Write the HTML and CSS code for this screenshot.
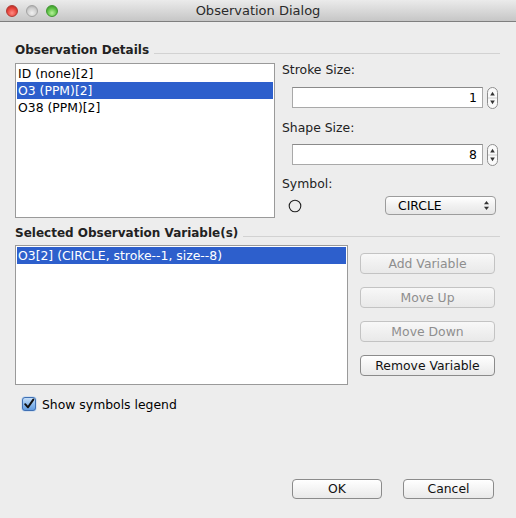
FILE: index.html
```html
<!DOCTYPE html>
<html>
<head>
<meta charset="utf-8">
<link rel="stylesheet" href="styles.css">
</head>
<body>
<div class="window">
  <div class="titlebar">
    <div class="lights">
      <span class="light red"></span>
      <span class="light gray"></span>
      <span class="light green"></span>
    </div>
    <div class="title">Observation Dialog</div>
  </div>
  <div class="content">
    <div class="group-head"><span class="group-title">Observation Details</span><span class="rule"></span></div>
    <div class="row1">
      <div class="listbox list1">
        <div class="item">ID (none)[2]</div>
        <div class="item selected">O3 (PPM)[2]</div>
        <div class="item">O38 (PPM)[2]</div>
      </div>
      <div class="props">
        <div class="label">Stroke Size:</div>
        <div class="field-row first">
          <div class="field">1</div>
          <svg class="stepper" width="11" height="22" viewBox="0 0 11 22">
            <rect x="0.5" y="0.5" width="10" height="21" rx="5" fill="#fafafa" stroke="#8e8e8e"/>
            <path d="M3.2 8.5 L5.5 4.8 L7.8 8.5 Z" fill="#333"/>
            <path d="M3.2 13.5 L5.5 17.2 L7.8 13.5 Z" fill="#333"/>
            <line x1="1" y1="11" x2="10" y2="11" stroke="#d0d0d0"/>
          </svg>
        </div>
        <div class="label second">Shape Size:</div>
        <div class="field-row second">
          <div class="field">8</div>
          <svg class="stepper" width="11" height="22" viewBox="0 0 11 22">
            <rect x="0.5" y="0.5" width="10" height="21" rx="5" fill="#fafafa" stroke="#8e8e8e"/>
            <path d="M3.2 8.5 L5.5 4.8 L7.8 8.5 Z" fill="#333"/>
            <path d="M3.2 13.5 L5.5 17.2 L7.8 13.5 Z" fill="#333"/>
            <line x1="1" y1="11" x2="10" y2="11" stroke="#d0d0d0"/>
          </svg>
        </div>
        <div class="label third">Symbol:</div>
        <div class="symbol-row">
          <svg class="circle" width="14" height="14" viewBox="0 0 14 14"><circle cx="7" cy="7" r="5.8" fill="none" stroke="#222" stroke-width="1.1"/></svg>
          <div class="combo">
            <span class="combo-text">CIRCLE</span>
            <svg class="combo-arrows" width="7" height="11" viewBox="0 0 7 11">
              <path d="M1 4.2 L3.5 1 L6 4.2 Z" fill="#333"/>
              <path d="M1 6.8 L3.5 10 L6 6.8 Z" fill="#333"/>
            </svg>
          </div>
        </div>
      </div>
    </div>
    <div class="group-head head2"><span class="group-title">Selected Observation Variable(s)</span><span class="rule"></span></div>
    <div class="row2">
      <div class="listbox list2">
        <div class="item selected">O3[2] (CIRCLE, stroke--1, size--8)</div>
      </div>
      <div class="buttons">
        <div class="btn disabled">Add Variable</div>
        <div class="btn disabled">Move Up</div>
        <div class="btn disabled">Move Down</div>
        <div class="btn">Remove Variable</div>
      </div>
    </div>
    <div class="check-row">
      <svg class="checkbox" width="16" height="16" viewBox="0 0 16 16">
        <defs>
          <linearGradient id="cb" x1="0" y1="0" x2="0" y2="1">
            <stop offset="0" stop-color="#c9e0f8"/>
            <stop offset="0.5" stop-color="#8fbcec"/>
            <stop offset="1" stop-color="#5f9ae0"/>
          </linearGradient>
        </defs>
        <rect x="0.5" y="0.5" width="15" height="15" rx="3" fill="#9cc4f0" opacity="0.6"/>
        <rect x="1.5" y="1.5" width="13" height="13" rx="2.5" fill="url(#cb)" stroke="#3f6fb3"/>
        <path d="M4.2 8.2 L7 11.3 L12.3 3.6" fill="none" stroke="#111" stroke-width="2" stroke-linecap="round" stroke-linejoin="round"/>
      </svg>
      <span class="check-label">Show symbols legend</span>
    </div>
  </div>
  <div class="footer">
    <div class="btn ok">OK</div>
    <div class="btn cancel">Cancel</div>
  </div>
</div>
</body>
</html>
```

FILE: styles.css
```css
* { box-sizing: border-box; }
html, body { margin: 0; padding: 0; }
body {
  font-family: "DejaVu Sans", "Liberation Sans", sans-serif;
  font-size: 12.4px;
  color: #000;
  background: #ededed;
}
.window {
  width: 516px;
  height: 518px;
  background: #ededed;
  display: flex;
  flex-direction: column;
  overflow: hidden;
}
.titlebar {
  height: 22px;
  flex: none;
  background: linear-gradient(#ebebeb, #d5d5d5 60%, #c6c6c6);
  border-bottom: 1px solid #7f7f7f;
  display: flex;
  align-items: center;
  position: relative;
}
.lights {
  display: flex;
  gap: 8px;
  padding-left: 6px;
}
.light {
  width: 12px;
  height: 12px;
  border-radius: 50%;
  display: block;
}
.light.red {
  background: radial-gradient(circle at 50% 70%, #ff8c83 0%, #e6423a 55%, #a8261f 100%);
  border: 1px solid #b03a33;
}
.light.gray {
  background: radial-gradient(circle at 50% 70%, #f0f0f0 0%, #cfcfcf 55%, #9e9e9e 100%);
  border: 1px solid #a3a3a3;
}
.light.green {
  background: radial-gradient(circle at 50% 70%, #b6f29a 0%, #5cbf43 55%, #2f8a22 100%);
  border: 1px solid #3f9630;
}
.title {
  position: absolute;
  left: 0;
  right: 0;
  text-align: center;
  font-size: 13px;
  color: #2a2a2a;
  line-height: 22px;
}
.content {
  padding: 21px 16px 0 15px;
}
.group-head {
  display: flex;
  align-items: flex-end;
  height: 14px;
  line-height: 14px;
}
.group-title {
  font-weight: bold;
  font-size: 12px;
  color: #222;
  white-space: nowrap;
}
.rule {
  flex: 1;
  border-top: 1px solid #d2d2d2;
  margin: 0 0 3px 5px;
}
.row1 {
  display: flex;
  margin-top: 6px;
}
.listbox {
  background: #fff;
  border: 1px solid #9a9a9a;
  padding: 1px;
}
.list1 { width: 260px; height: 155px; }
.item {
  height: 17px;
  line-height: 17px;
  padding-left: 1px;
  white-space: nowrap;
}
.item.selected {
  background: #2d5fcc;
  color: #fff;
}
.props {
  margin-left: 7px;
  flex: 1;
  display: flex;
  flex-direction: column;
}
.label {
  height: 14px;
  line-height: 14px;
  color: #222;
}
.label.second { margin-top: 12px; }
.label.third { margin-top: 11px; }
.field-row {
  display: flex;
  align-items: flex-start;
  padding-left: 10px;
}
.field-row.first { margin-top: 10px; }
.field-row.second { margin-top: 9px; }
.field {
  width: 191px;
  height: 21px;
  background: #fff;
  border: 1px solid #a9a9a9;
  border-top-color: #8a8a8a;
  text-align: right;
  padding-right: 5px;
  line-height: 19px;
}
.stepper {
  margin-left: 4px;
  margin-top: 0;
  display: block;
}
.symbol-row {
  display: flex;
  align-items: center;
  margin-top: 5px;
  height: 19px;
}
.circle {
  margin-left: 6px;
  display: block;
}
.combo {
  margin-left: auto;
  margin-right: 4px;
  width: 111px;
  height: 19px;
  border: 1px solid #9c9c9c;
  border-radius: 4px;
  background: linear-gradient(#ffffff, #f1f1f1 50%, #e6e6e6);
  display: flex;
  align-items: center;
  padding-left: 12px;
  padding-right: 5px;
}
.combo-text { flex: 1; line-height: 17px; }
.combo-arrows { display: block; }
.head2 { margin-top: 8px; }
.row2 {
  display: flex;
  margin-top: 5px;
}
.list2 { width: 333px; height: 140px; }
.buttons {
  margin-left: 12px;
  width: 135px;
  padding-top: 8px;
  display: flex;
  flex-direction: column;
  gap: 13px;
}
.btn {
  height: 21px;
  border: 1px solid #8b8b8b;
  border-radius: 4px;
  background: linear-gradient(#ffffff, #f4f4f4 50%, #e9e9e9);
  text-align: center;
  line-height: 19px;
  color: #111;
  white-space: nowrap;
}
.btn.disabled {
  border-color: #c3c3c3;
  color: #8e8e8e;
  background: linear-gradient(#f8f8f8, #f0f0f0 50%, #e9e9e9);
}
.check-row {
  display: flex;
  align-items: center;
  margin-top: 11px;
  height: 16px;
  padding-left: 6px;
}
.checkbox { display: block; }
.check-label { margin-left: 5px; }
.footer {
  margin-top: auto;
  display: flex;
  justify-content: flex-end;
  gap: 21px;
  padding: 0 22px 19px 0;
}
.btn.ok { width: 90px; height: 20px; line-height: 18px; }
.btn.cancel { width: 91px; height: 20px; line-height: 18px; }
```
